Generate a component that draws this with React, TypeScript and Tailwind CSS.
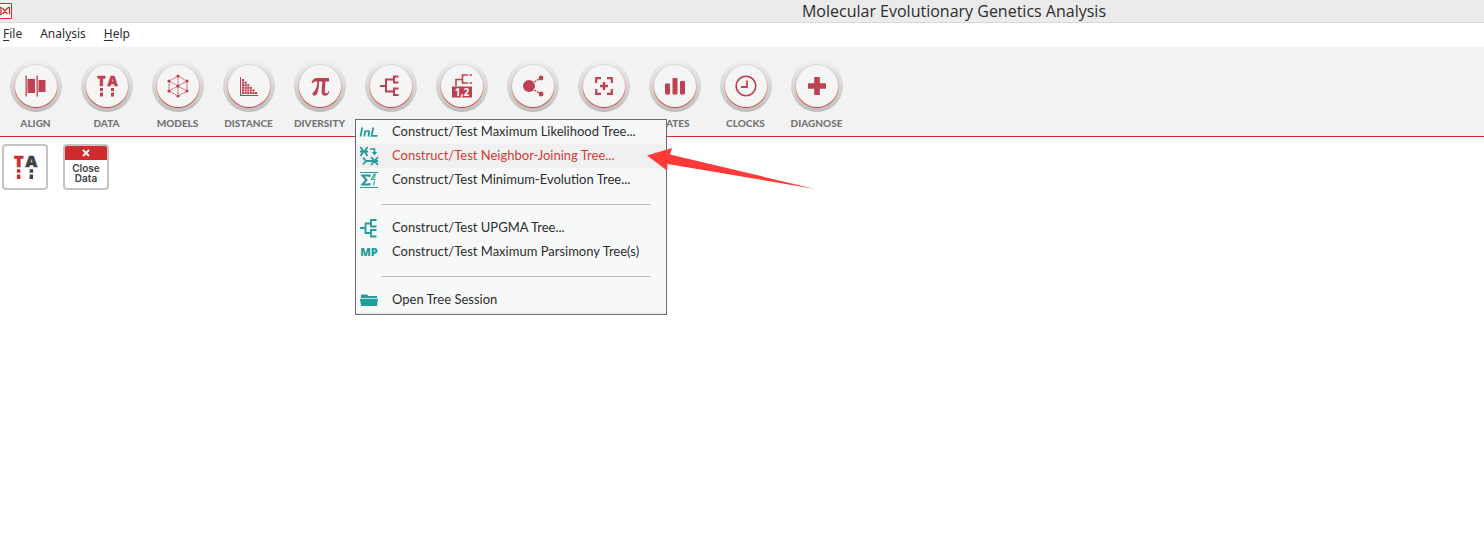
import { useState, type ReactNode } from "react";

const RED = "#bd4150";
const TEAL = "#249c9b";

function Letters({ left, right, large }: { left: string; right: string; large?: boolean }) {
  return (
    <svg viewBox="0 0 26 26" className={large ? "size-[30px] overflow-visible" : "size-[26px] overflow-visible"} aria-hidden="true">
      <g fontFamily="'Open Sans', sans-serif" fontWeight="800" fontSize="14" textAnchor="middle">
        <text x="7.500" y="13" fill={left} stroke={left} strokeWidth=".5">T</text>
        <text x="18.500" y="13" fill={right} stroke={right} strokeWidth=".5">A</text>
      </g>
      <path d="M6 15h3v3H6zM6 19.500h3v4H6z" fill={left} />
      <path d="M17 15h3v3h-3zM17 19.500h3v4h-3z" fill={right} />
    </svg>
  );
}

function Glyph({ children }: { children: ReactNode }) {
  return (
    <svg viewBox="0 0 26 26" className="size-[26px] overflow-visible" fill={RED} aria-hidden="true">
      {children}
    </svg>
  );
}

const distanceColumns = [6, 5, 4, 3, 2, 1];

type Tool = { label: string; icon: ReactNode; underMenu?: boolean };

const tools: Tool[] = [
  {
    label: "ALIGN",
    icon: (
      <Glyph>
        <path d="M2.500 2.500h1.300v21H2.500zM13.500 2.500h1.300v21h-1.300zM4.500 6H12v14H4.500zM15.500 7h7v12h-7z" />
      </Glyph>
    ),
  },
  { label: "DATA", icon: <Letters left={RED} right={RED} /> },
  {
    label: "MODELS",
    icon: (
      <Glyph>
        <path
          d="M13 3l9 5v10l-9 5-9-5V8zM13 3v20M4 8l9 5 9-5M4 18l9-5 9 5"
          fill="none"
          stroke={RED}
          strokeWidth=".9"
          strokeDasharray="2 .7"
        />
        {[[13, 3], [22, 8], [22, 18], [13, 23], [4, 18], [4, 8], [13, 13]].map(([x, y]) => (
          <circle key={`${x}-${y}`} cx={x} cy={y} r="1.600" />
        ))}
      </Glyph>
    ),
  },
  {
    label: "DISTANCE",
    icon: (
      <Glyph>
        <path d="M4 4h1v18h17v1H4z" />
        {distanceColumns.map((count, col) =>
          Array.from({ length: count }, (_, row) => (
            <rect key={`${col}-${row}`} x={6 + col * 2.6} y={19 - row * 2.6} width="2.100" height="2.100" />
          )),
        )}
      </Glyph>
    ),
  },
  {
    label: "DIVERSITY",
    icon: (
      <Glyph>
        <path d="M4.500 10C5.500 6.500 7 5 10 5h12v3.500h-3.600l-.6 9c-.1 2 .5 2.800 1.500 2.800 1.200 0 1.700-.8 2-2h.9c-.3 3-1.600 4.400-4.100 4.400-2.600 0-3.700-1.700-3.500-4.500l.7-9.700h-3.100c-.2 5.500-.9 9.500-2 12-1 2.400-4.300 3-4.700.8-.3-1.500 1.200-2.100 2.300-3.500 1.500-2 2.300-5 2.600-9.300-2.300-.1-3.800.2-4.900 1.700z" />
      </Glyph>
    ),
  },
  {
    label: "PHYLOGENY",
    underMenu: true,
    icon: (
      <Glyph>
        <path
          d="M2 13h5M20.500 3.500H16v6h4.500M16 6.500H8v12h8M20.500 15.500H16V22h4.500"
          fill="none"
          stroke={RED}
          strokeWidth="2"
        />
      </Glyph>
    ),
  },
  {
    label: "USER TREE",
    underMenu: true,
    icon: (
      <Glyph>
        <path d="M7 13V6.500h6M19 2h-5.500v8H19" fill="none" stroke={RED} strokeWidth="1.600" />
        <path d="M20.500 2H23M20.500 10H23" fill="none" stroke={RED} strokeWidth="1.600" />
        <path d="M3 13.500h20v11H3z" />
        <text x="13" y="23" fill="#fff" fontFamily="'Open Sans', sans-serif" fontWeight="700" fontSize="10" textAnchor="middle">
          1,2
        </text>
      </Glyph>
    ),
  },
  {
    label: "ANCESTORS",
    underMenu: true,
    icon: (
      <Glyph>
        <circle cx="9" cy="13" r="6" />
        <circle cx="21" cy="5" r="2.400" />
        <circle cx="21" cy="21" r="2.400" />
        <path d="M14.500 9l4.500-3M14.500 17l4.500 3" stroke={RED} strokeWidth="1.300" strokeDasharray="2 1" />
      </Glyph>
    ),
  },
  {
    label: "SELECTION",
    underMenu: true,
    icon: (
      <Glyph>
        <path
          d="M5.200 10V5.200H10M16 5.200h4.800V10M20.800 16v4.800H16M10 20.800H5.200V16"
          fill="none"
          stroke={RED}
          strokeWidth="2.200"
        />
        <path d="M11.800 9h2.400v2.800H17v2.400h-2.800V17h-2.400v-2.800H9v-2.400h2.800z" />
      </Glyph>
    ),
  },
  {
    label: "RATES",
    icon: (
      <Glyph>
        <rect x="3" y="10.500" width="5" height="11" rx="1" />
        <rect x="10.500" y="5" width="5" height="16.500" rx="1" />
        <rect x="18" y="8" width="5" height="13.500" rx="1" />
      </Glyph>
    ),
  },
  {
    label: "CLOCKS",
    icon: (
      <Glyph>
        <circle cx="13" cy="13" r="9.800" fill="none" stroke={RED} strokeWidth="1.600" />
        <path d="M14 7.500v6.500H8" fill="none" stroke={RED} strokeWidth="1.800" />
      </Glyph>
    ),
  },
  {
    label: "DIAGNOSE",
    icon: (
      <Glyph>
        <path d="M10.200 4h5.600v6.200H22v5.600h-6.200V22h-5.600v-6.200H4v-5.600h6.200z" />
      </Glyph>
    ),
  },
];

function MenuGlyph({ children }: { children: ReactNode }) {
  return (
    <svg viewBox="0 0 20 20" className="size-5 shrink-0" fill="none" stroke={TEAL} aria-hidden="true">
      {children}
    </svg>
  );
}

const menuGroups: { label: string; icon: ReactNode }[][] = [
  [
    {
      label: "Construct/Test Maximum Likelihood Tree...",
      icon: (
        <MenuGlyph>
          <path
            d="M3.300 5.500L1.500 14.500M5.200 14.500l1.200-6M6.200 10c1.500-1.700 4.500-1.700 4 .5l-.8 4M14.300 5.500l-1.700 8.300h5.900"
            strokeWidth="1.800"
          />
        </MenuGlyph>
      ),
    },
    {
      label: "Construct/Test Neighbor-Joining Tree...",
      icon: (
        <MenuGlyph>
          <path d="M1.500 1l3 4.500-3 4.500M8.500 1l-3 4.500 3 4.500M1 5.500h8" strokeWidth="1.800" />
          <path d="M11 3h4.500v4" strokeWidth="1.500" />
          <path d="M12.800 6h5.400l-2.700 3.600z" fill={TEAL} stroke="none" />
          <path d="M4 11.500L7 15l-3 3.500M7 15h12M12 11l3.500 4-3.500 4M19 11l-3.500 4 3.500 4" strokeWidth="1.800" />
        </MenuGlyph>
      ),
    },
    {
      label: "Construct/Test Minimum-Evolution Tree...",
      icon: (
        <MenuGlyph>
          <path d="M1 2.500h18M1 17.500h18" />
          <path d="M10.500 7V5.500H3.500L7.500 10l-4 4.500h7V13" strokeWidth="2" />
          <path d="M12 10l3-5.500c1.500-1.500 2 .5-.5 4M13 9.500h3M15.500 11l-1 4.500" strokeWidth="1.100" />
        </MenuGlyph>
      ),
    },
  ],
  [
    {
      label: "Construct/Test UPGMA Tree...",
      icon: (
        <MenuGlyph>
          <path d="M1 10h5M12 5.500H6.500v9.500H12M17.500 2H12v6.500h5.500M17.500 12H12v6.500h5.500" strokeWidth="1.800" />
        </MenuGlyph>
      ),
    },
    {
      label: "Construct/Test Maximum Parsimony Tree(s)",
      icon: (
        <span aria-hidden="true" className="w-5 shrink-0 text-center font-['Open_Sans',sans-serif] text-[11px] font-extrabold text-[#249c9b]">
          MP
        </span>
      ),
    },
  ],
  [
    {
      label: "Open Tree Session",
      icon: (
        <MenuGlyph>
          <path d="M2 4.500h6l1.500 1.500H18v2H2z" fill={TEAL} stroke="none" />
          <path d="M1 8.700h18L18 16H2z" fill={TEAL} stroke="none" />
        </MenuGlyph>
      ),
    },
  ],
];

function PhylogenyMenu() {
  const [active, setActive] = useState("Construct/Test Neighbor-Joining Tree...");
  return (
    <div role="menu" aria-label="Phylogeny" className="absolute top-18 left-[355px] z-10 w-[312px] border border-[#6b6b6b] bg-[#f7f9f9]">
      {menuGroups.map((group, index) => (
        <div key={index} role="group">
          {index > 0 && (
            <div className="flex h-6 items-center pr-4 pl-[26px]">
              <hr className="w-full border-[#bdbdbd]" />
            </div>
          )}
          {group.map(({ label, icon }) => (
            <button
              key={label}
              type="button"
              role="menuitem"
              onMouseEnter={() => setActive(label)}
              className={`flex h-6 w-full items-center gap-[13px] pl-[3px] text-left font-[Lato,sans-serif] text-[13px] whitespace-nowrap ${
                active === label ? "bg-[#f0f0f0] text-[#d33c38]" : "text-[#2d2d2d]"
              }`}
            >
              {icon}
              {label}
            </button>
          ))}
        </div>
      ))}
      <div className="h-0.5 bg-[#efefef]" />
    </div>
  );
}

function ToolButton({ label, icon, underMenu }: Tool) {
  return (
    <button type="button" aria-label={label} className="flex w-[71px] shrink-0 flex-col items-center gap-[3px]">
      <span className="flex size-[52px] items-center justify-center rounded-full bg-linear-to-b from-[#f0f0f0] via-[#d5d6d6] to-[#bdbdbd]">
        <span className="flex size-11 items-start justify-center rounded-full bg-linear-to-b from-[#d9dcdd] via-[#e4b5ab] to-[#d22f2c] p-px">
          <span className="flex size-[42px] items-center justify-center rounded-full bg-[#f5f5f5]">{icon}</span>
        </span>
      </span>
      {!underMenu && (
        <span className="font-[Lato,sans-serif] text-[10px] leading-4 font-black whitespace-nowrap text-[#757575]">{label}</span>
      )}
    </button>
  );
}

export default function App() {
  return (
    <div className="min-h-screen overflow-x-hidden bg-white font-['Noto_Sans','Noto_Sans_CJK_SC',sans-serif] text-[#2d2d2d]">
      <header className="flex h-[23px] items-center border-b border-[#d9d9d9] bg-[#ebebeb]">
        <svg viewBox="0 0 12 16" className="h-4 w-3 shrink-0" fill="none" stroke="#cf2b2e" aria-hidden="true">
          <path d="M0 .5h11.500v15H0" fill="#fff" />
          <path d="M0 4.500h1v7H0M2.500 5l5 6M7.500 5l-5 6M7.500 4.500H9.500v7" strokeWidth="1.300" />
        </svg>
        <h1 className="flex-1 pl-[412px] text-center font-['Open_Sans',sans-serif] text-base leading-5">Molecular Evolutionary Genetics Analysis</h1>
      </header>

      <nav aria-label="Main menu" className="flex h-6 items-center gap-[18px] px-[3px] pb-0.5 text-xs">
        <button type="button"><u className="underline-offset-2">F</u>ile</button>
        <button type="button">Anal<u className="underline-offset-2">y</u>sis</button>
        <button type="button"><u className="underline-offset-2">H</u>elp</button>
      </nav>

      <div className="relative border-b border-[#cf2b2e] bg-[#f2f2f2]">
        <div role="toolbar" aria-label="Analysis tools" className="flex h-[89px] items-start pt-[13px]">
          {tools.map((tool) => (
            <ToolButton key={tool.label} {...tool} />
          ))}
        </div>
        <PhylogenyMenu />
        <svg viewBox="0 0 170 46" className="pointer-events-none absolute top-[99px] left-[646px] z-20 h-[46px] w-[170px]" aria-hidden="true">
          <path d="M1 9.500L26 2l-2 6.500L169 43 21.500 18 21 24.500z" fill="#fe3b39" />
        </svg>
      </div>

      <main className="flex gap-[15px] px-0.5 pt-[7px]">
        <button
          type="button"
          aria-label="View sequence data"
          className="flex size-[46px] items-center justify-center rounded border-2 border-[#c4c4c4] bg-white"
        >
          <Letters left="#cf2b2e" right="#414042" large />
        </button>
        <button type="button" className="flex size-[46px] flex-col overflow-hidden rounded border-2 border-[#c4c4c4] bg-white">
          <span className="flex h-[14px] w-full shrink-0 items-center justify-center bg-[#cf2b2e]">
            <svg viewBox="0 0 8 8" className="size-2" stroke="#fff" strokeWidth="1.800" aria-hidden="true">
              <path d="M1 1l6 6M7 1L1 7" />
            </svg>
          </span>
          <span className="w-full pt-[3px] text-center font-[Inter,sans-serif] text-[10px] leading-[10px] font-semibold text-[#414042]">
            Close
            <br />
            Data
          </span>
        </button>
      </main>
    </div>
  );
}
